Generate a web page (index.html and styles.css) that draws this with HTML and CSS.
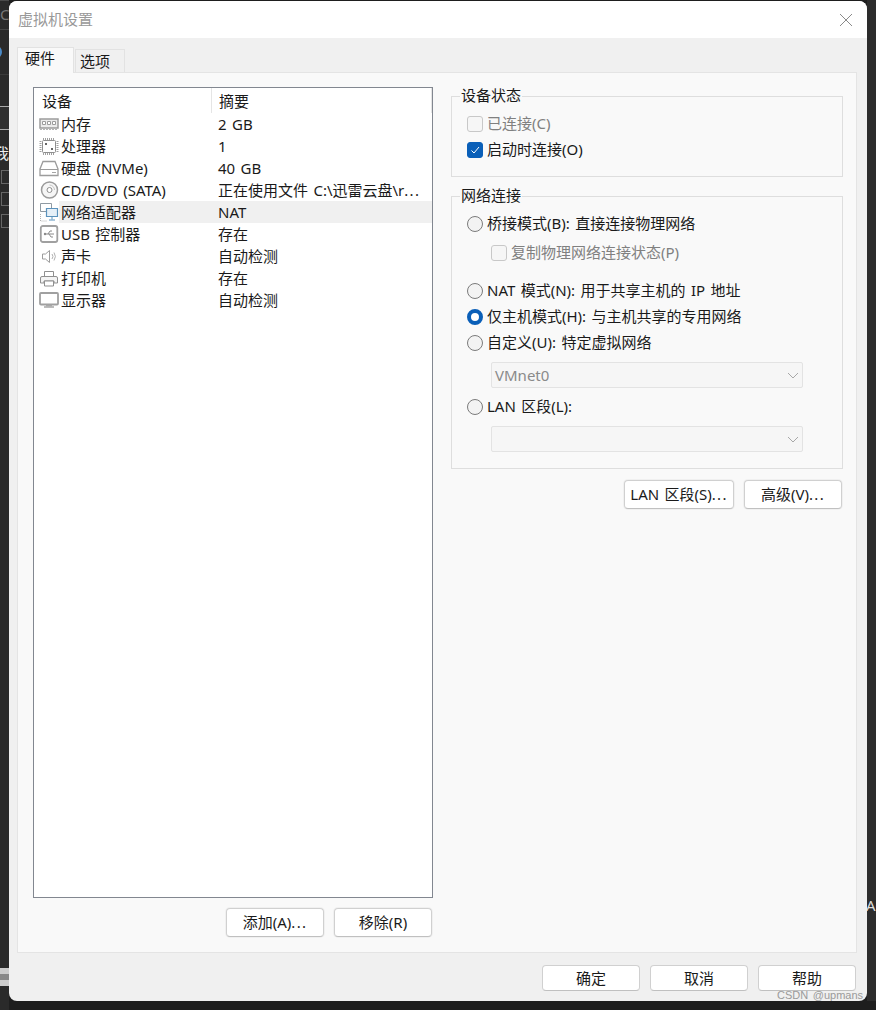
FILE: index.html
```html
<!DOCTYPE html>
<html lang="zh-CN">
<head>
<meta charset="utf-8">
<title>虚拟机设置</title>
<link rel="stylesheet" href="styles.css">
</head>
<body>
<div class="desk-left">
  <span class="bit bit-line1"></span><span class="bit bit-line2"></span><span class="bit bit-line3"></span>
  <span class="bit bit-c">C</span><span class="bit bit-arc"></span>
  <span class="bit bit-bar"></span><span class="bit bit-wo">我</span>
  <span class="bit bit-box b1"></span><span class="bit bit-box b2"></span><span class="bit bit-box b3"></span>
  <span class="bit bit-foot"></span>
</div>
<div class="desk-right"></div>
<div class="desk-text">Ac</div>
<div class="window">
  <header class="titlebar">
    <span class="title">虚拟机设置</span>
    <svg class="close" width="14" height="14" viewBox="0 0 14 14"><path d="M1 1 13 13M13 1 1 13" stroke="#8a8a8a" stroke-width="1" fill="none"/></svg>
  </header>
  <div class="content">
    <nav class="tabs">
      <div class="tab active">硬件</div>
      <div class="tab">选项</div>
    </nav>
    <main class="panel">
      <section class="left">
        <div class="list">
          <div class="list-head"><div class="head-a">设备</div><div class="head-b">摘要</div></div>

          <div class="row">
            <svg class="ico" viewBox="0 0 20 20"><path d="M1 5h18v9H1z" fill="#ececec" stroke="#9c9c9c" stroke-width="1.500"/><path d="M3.500 7.500h3v3h-3zM8.500 7.500h3v3h-3zM13.500 7.500h3v3h-3z" fill="#fff" stroke="#9c9c9c"/><path d="M1 15.500h18" stroke="#b5b5b5" stroke-dasharray="2 1"/></svg>
            <span class="name">内存</span><span class="sum">2 GB</span>
          </div>
          <div class="row">
            <svg class="ico" viewBox="0 0 20 20"><rect x="3.500" y="4.500" width="13" height="12" rx="1" fill="#fff" stroke="#8f8f8f"/><path d="M4 3h12M4 18h12M1.500 5v11M18.500 5v11" fill="none" stroke="#a0a0a0" stroke-width="2" stroke-dasharray="1 1"/><path d="M6 7h2v2H6zM12 12h2v2h-2z" fill="#666"/></svg>
            <span class="name">处理器</span><span class="sum">1</span>
          </div>
          <div class="row">
            <svg class="ico" viewBox="0 0 20 20"><path d="M4 3.500h12l3 7.500v6.500H1V11z" fill="#fff" stroke="#9c9c9c" stroke-width="1.300"/><path d="M1 11.500h18" stroke="#9c9c9c"/><path d="M13 14.500h4" stroke="#a5a5a5" stroke-width="1.200"/></svg>
            <span class="name">硬盘 (NVMe)</span><span class="sum">40 GB</span>
          </div>
          <div class="row">
            <svg class="ico" viewBox="0 0 20 20"><circle cx="10.500" cy="10" r="8" fill="#f6f6f6" stroke="#9c9c9c" stroke-width="1.500"/><circle cx="10.500" cy="10" r="2.500" fill="#fff" stroke="#8f8f8f"/><path d="M10.500 5a5 5 0 0 1 5 5" fill="none" stroke="#c4c4c4"/></svg>
            <span class="name">CD/DVD (SATA)</span><span class="sum">正在使用文件 C:\迅雷云盘\r<span class="dots">...</span></span>
          </div>
          <div class="row selected">
            <svg class="ico" viewBox="0 0 20 20"><path d="M1.500 1.500h11v8h-11z" fill="#fff" stroke="#8f9aa3"/><path d="M7.500 6.500h11v8h-11z" fill="#e6f0f8" stroke="#5b93bd" stroke-width="1.200"/><path d="M13 14.500v3M10 18h6" fill="none" stroke="#5b93bd"/><path d="M1.500 12v7h6" fill="none" stroke="#b0b0b0" stroke-dasharray="1 1"/></svg>
            <span class="name">网络适配器</span><span class="sum">NAT</span>
          </div>
          <div class="row">
            <svg class="ico" viewBox="0 0 20 20"><rect x="1.800" y="2" width="16.500" height="16" rx="2" fill="#fff" stroke="#a0a0a0" stroke-width="1.800"/><path d="M6 10h9M9 10l2-3h2M10 10l2 3h2" fill="none" stroke="#8a8a8a"/><circle cx="6" cy="10" r="1.200" fill="#8a8a8a"/></svg>
            <span class="name">USB 控制器</span><span class="sum">存在</span>
          </div>
          <div class="row">
            <svg class="ico" viewBox="0 0 20 20"><path d="M3.500 8h3l4-3.500v12l-4-3.500h-3z" fill="#fff" stroke="#9c9c9c"/><path d="M13 8a4 4 0 0 1 0 5M15 6.500a7 7 0 0 1 0 8" fill="none" stroke="#b0b0b0"/></svg>
            <span class="name">声卡</span><span class="sum">自动检测</span>
          </div>
          <div class="row">
            <svg class="ico" viewBox="0 0 20 20"><path d="M5.500 8V3.500h9V8" fill="#fff" stroke="#8f8f8f"/><path d="M3 8.500h14a1.500 1.500 0 0 1 1.500 1.500v5H15v-2H5v2H1.500v-5A1.500 1.500 0 0 1 3 8.500z" fill="#f4f4f4" stroke="#8f8f8f"/><path d="M5.500 13h9v5h-9z" fill="#fff" stroke="#8f8f8f"/></svg>
            <span class="name">打印机</span><span class="sum">存在</span>
          </div>
          <div class="row">
            <svg class="ico" viewBox="0 0 20 20"><rect x="1" y="3" width="18" height="11.500" rx="1" fill="#fff" stroke="#a0a0a0" stroke-width="1.800"/><path d="M7 15.500h6" stroke="#a8a8a8" stroke-width="1.500"/><path d="M5 17h10" stroke="#8f8f8f" stroke-width="1.200"/></svg>
            <span class="name">显示器</span><span class="sum">自动检测</span>
          </div>
        </div>
        <div class="list-actions">
          <button class="btn" type="button">添加(A)<span class="dots">...</span></button>
          <button class="btn" type="button">移除(R)</button>
        </div>
      </section>

      <section class="right">
        <div class="group group-status">
          <div class="legend">设备状态</div>
          <label class="opt disabled"><span class="check"></span><span class="lbl">已连接(C)</span></label>
          <label class="opt"><span class="check on"><svg width="10" height="10" viewBox="0 0 10 10"><path d="M1.500 5.500 4 8l5-6" fill="none" stroke="#fff" stroke-width="1"/></svg></span><span class="lbl">启动时连接(O)</span></label>
        </div>
        <div class="group group-net">
          <div class="legend">网络连接</div>
          <label class="opt"><span class="radio"></span><span class="lbl">桥接模式(B): 直接连接物理网络</span></label>
          <label class="opt disabled sub"><span class="check"></span><span class="lbl">复制物理网络连接状态(P)</span></label>
          <label class="opt gap"><span class="radio"></span><span class="lbl">NAT 模式(N): 用于共享主机的 IP 地址</span></label>
          <label class="opt"><span class="radio on"></span><span class="lbl">仅主机模式(H): 与主机共享的专用网络</span></label>
          <label class="opt"><span class="radio"></span><span class="lbl">自定义(U): 特定虚拟网络</span></label>
          <div class="select"><span class="val">VMnet0</span><svg class="chev" width="12" height="7" viewBox="0 0 12 7"><path d="M1 1l5 5 5-5" fill="none" stroke="#a8a8a8"/></svg></div>
          <label class="opt"><span class="radio"></span><span class="lbl">LAN 区段(L):</span></label>
          <div class="select"><span class="val"></span><svg class="chev" width="12" height="7" viewBox="0 0 12 7"><path d="M1 1l5 5 5-5" fill="none" stroke="#a8a8a8"/></svg></div>
        </div>
        <div class="net-actions">
          <button class="btn wide" type="button">LAN 区段(S)<span class="dots">...</span></button>
          <button class="btn" type="button">高级(V)<span class="dots">...</span></button>
        </div>
      </section>
    </main>
    <footer class="footer">
      <button class="btn plain" type="button">确定</button>
      <button class="btn plain" type="button">取消</button>
      <button class="btn plain" type="button">帮助</button>
    </footer>
  </div>
</div>
<div class="watermark">CSDN @upmans</div>
</body>
</html>
```

FILE: styles.css
```css
* { box-sizing: border-box; }
html, body { margin: 0; height: 100%; }
body {
  width: 876px;
  height: 1010px;
  overflow: hidden;
  position: relative;
  background: #1e1e1e;
  padding: 1px 0 0 9px;
  font-family: "Noto Sans", "Noto Sans CJK SC", sans-serif;
  font-size: 15px;
  word-spacing: 1.500px;
  color: #1a1a1a;
}
.dots { letter-spacing: 1.300px; }
.window {
  width: 858px;
  height: 1000px;
  background: #f0f0f0;
  border-radius: 8px;
  overflow: hidden;
  display: flex;
  flex-direction: column;
  position: relative;
}
.titlebar {
  height: 37px;
  flex: none;
  background: #fff;
  display: flex;
  align-items: center;
  justify-content: space-between;
  padding: 0 14px 0 9px;
}
.title { color: #999; line-height: 37px; }
.close { display: block; }
.content {
  flex: 1;
  padding: 9px 10px 0 8px;
  display: flex;
  flex-direction: column;
}
.tabs { display: flex; align-items: flex-end; height: 25px; flex: none; position: relative; z-index: 1; }
.tab {
  width: 50px;
  height: 23px;
  margin-left: 1px;
  padding-left: 4px;
  background: #f0f0f0;
  border: 1px solid #e2e2e2;
  border-bottom: 0;
  line-height: 22px;
}
.tab.active {
  width: 57px;
  height: 26px;
  margin: 0 0 -1px 0;
  padding-left: 7px;
  background: #f9f9f9;
  line-height: 21px;
}
.panel {
  height: 881px;
  flex: none;
  background: #f9f9f9;
  border: 1px solid #e4e4e4;
  padding: 14px 0 0 15px;
  display: flex;
}
.left { width: 400px; flex: none; }
.list {
  height: 811px;
  background: #fff;
  border: 1px solid #828790;
}
.list-head { display: flex; height: 25px; line-height: 26px; }
.head-a { width: 178px; padding-left: 8px; border-right: 1px solid #e5e5e5; }
.head-b { width: 220px; padding-left: 7px; border-right: 1px solid #e5e5e5; }
.row { display: flex; height: 22px; line-height: 22px; padding-left: 5px; }
.ico { width: 20px; height: 20px; flex: none; margin-top: 1px; }
.name { width: 152px; flex: none; padding-left: 2px; white-space: nowrap; }
.sum { flex: 1; padding-left: 7px; white-space: nowrap; }
.selected .name, .selected .sum { background: #f0f0f0; }
.list-actions { display: flex; justify-content: flex-end; gap: 10px; margin-top: 10px; padding-right: 1px; }
.btn {
  width: 98px;
  height: 29px;
  padding: 0 0 3px;
  background: #fff;
  border: 1px solid #d0d0d0;
  border-bottom-color: #c0c0c0;
  border-radius: 4px;
  box-shadow: 0 0 0 1px #f0f0f0;
  font: inherit;
  word-spacing: inherit;
  color: #1a1a1a;
}
.btn.wide { width: 110px; }
.btn.plain { height: 26px; box-shadow: none; padding-bottom: 2px; }
.right { width: 392px; flex: none; margin-left: 18px; padding-top: 9px; }
.group { border: 1px solid #dedede; padding: 0 0 0 15px; }
.group-status { height: 81px; }
.group-net { height: 273px; margin-top: 19px; }
.legend {
  width: fit-content;
  height: 20px;
  line-height: 17px;
  margin: -10px 0 4px -7px;
  padding: 0 1px;
  background: #f9f9f9;
}
.opt { display: flex; align-items: center; gap: 4px; height: 26px; white-space: nowrap; }
.lbl { padding-bottom: 3px; }
.opt.disabled { color: #808080; }
.opt.sub { margin: 3px 0 0 24px; }
.opt.gap { margin-top: 12px; }
.check {
  width: 16px;
  height: 16px;
  flex: none;
  background: #f6f6f6;
  border: 1px solid #c8c8c8;
  border-radius: 3px;
  display: flex;
  align-items: center;
  justify-content: center;
}
.check.on { background: #0a5fb8; border-color: #0a5fb8; }
.radio {
  width: 16px;
  height: 16px;
  flex: none;
  background: #f3f3f3;
  border: 1px solid #7b7b7b;
  border-radius: 50%;
}
.radio.on { background: #fff; border: 4.500px solid #0a5fb8; }
.select {
  width: 312px;
  height: 26px;
  margin: 6px 0 6px 24px;
  padding: 0 3px 0 3px;
  background: #f6f6f6;
  border: 1px solid #e3e3e3;
  border-radius: 2px;
  color: #8a8a8a;
  display: flex;
  align-items: center;
  justify-content: space-between;
}
.net-actions { display: flex; justify-content: flex-end; gap: 10px; margin-top: 11px; padding-right: 1px; }
.footer { display: flex; justify-content: flex-end; gap: 10px; margin-top: 12px; padding-right: 1px; }
.desk-left { position: absolute; left: 0; top: 0; width: 9px; height: 1010px; background: #2a2a2a; overflow: hidden; }
.desk-right { position: absolute; right: 0; top: 0; width: 9px; height: 1001px; background: #2c2c2c; }
.bit { position: absolute; left: 0; display: block; }
.bit-line1 { top: 0; width: 9px; height: 1px; background: #4a4a4a; }
.bit-line2 { top: 29px; width: 9px; height: 1px; background: #444; }
.bit-line3 { top: 74px; width: 9px; height: 1px; background: #3a3a3a; }
.bit-c { top: 4px; color: #777; font-size: 15px; line-height: 20px; }
.bit-arc { top: 46px; left: -8px; width: 10px; height: 12px; border: 2px solid #e0a040; border-right-color: #4a8ac8; border-radius: 50%; }
.bit-bar { top: 106px; width: 9px; height: 24px; background: #2f2f2f; border-top: 1px solid #aaa; border-bottom: 1px solid #aaa; }
.bit-wo { top: 143px; left: -6px; color: #eee; line-height: 20px; }
.bit-box { width: 9px; height: 14px; left: 1px; border: 1px solid #666; }
.b1 { top: 170px; }
.b2 { top: 192px; }
.b3 { top: 214px; }
.bit-foot { top: 968px; width: 9px; height: 18px; background: linear-gradient(#ccc 0 6px, #888 6px 12px, #ccc 12px); }
.desk-text { position: absolute; left: 866px; top: 895px; color: #ddd; font-size: 15px; }
.watermark {
  position: absolute;
  left: 777px;
  top: 988px;
  font-family: "Liberation Sans", sans-serif;
  font-size: 11px;
  line-height: 14px;
  color: #9a9a9a;
  white-space: nowrap;
}
```
